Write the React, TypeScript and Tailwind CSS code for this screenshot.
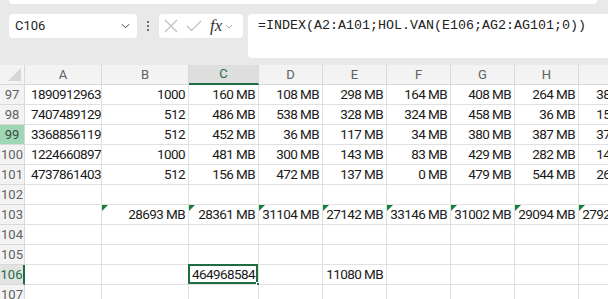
import React from 'react';

const cols = [
  { key: 'A', w: 'w-[77px]', align: 'text-left pl-[6px]' },
  { key: 'B', w: 'w-[87px]', align: 'text-right pr-[3px]' },
  { key: 'C', w: 'w-[70px]', align: 'text-right pr-[3px]' },
  { key: 'D', w: 'w-[64px]', align: 'text-right pr-[3px]' },
  { key: 'E', w: 'w-[64px]', align: 'text-right pr-[3px]' },
  { key: 'F', w: 'w-[64px]', align: 'text-right pr-[3px]' },
  { key: 'G', w: 'w-[64px]', align: 'text-right pr-[3px]' },
  { key: 'H', w: 'w-[64px]', align: 'text-right pr-[3px]' },
  { key: 'I', w: 'w-[64px]', align: 'text-right pr-[3px]' },
];

const rows: { n: number; cells: string[]; flag?: boolean }[] = [
  { n: 97, cells: ['1890912963', '1000', '160 MB', '108 MB', '298 MB', '164 MB', '408 MB', '264 MB', '385 MB'] },
  { n: 98, cells: ['7407489129', '512', '486 MB', '538 MB', '328 MB', '324 MB', '458 MB', '36 MB', '152 MB'] },
  { n: 99, cells: ['3368856119', '512', '452 MB', '36 MB', '117 MB', '34 MB', '380 MB', '387 MB', '376 MB'] },
  { n: 100, cells: ['1224660897', '1000', '481 MB', '300 MB', '143 MB', '83 MB', '429 MB', '282 MB', '142 MB'] },
  { n: 101, cells: ['4737861403', '512', '156 MB', '472 MB', '137 MB', '0 MB', '479 MB', '544 MB', '265 MB'] },
  { n: 102, cells: ['', '', '', '', '', '', '', '', ''] },
  { n: 103, cells: ['', '28693 MB', '28361 MB', '31104 MB', '27142 MB', '33146 MB', '31002 MB', '29094 MB', '27925 MB'], flag: true },
  { n: 104, cells: ['', '', '', '', '', '', '', '', ''] },
  { n: 105, cells: ['', '', '', '', '', '', '', '', ''] },
  { n: 106, cells: ['', '', '464968584', '', '11080 MB', '', '', '', ''] },
  { n: 107, cells: ['', '', '', '', '', '', '', '', ''] },
];

function Chevron({ className }: { className?: string }) {
  return (
    <svg viewBox="0 0 10 6" className={className} fill="none" stroke="currentColor" strokeWidth="1.1">
      <path d="M1 1l4 4 4-4" />
    </svg>
  );
}

export default function App() {
  return (
    <div className="w-[608px] h-[299px] overflow-hidden bg-[#e9e9e9] font-['Roboto',sans-serif]">
      {/* strip of the ribbon above */}
      <div className="ml-[9px] mr-[11px] h-[4px] bg-white rounded-b-[4px]" />

      {/* name box + formula bar */}
      <div className="flex items-start pl-[9px] mt-[10px] h-[44px]">
        <div className="w-[128px] h-[24px] bg-white rounded-[4px] flex items-center pl-[6px] pr-[7px] text-[13px] text-[#1f1f1f]">
          <span className="flex-1">C106</span>
          <Chevron className="w-[9px] h-[6px] text-[#444]" />
        </div>
        <div className="w-[22px] h-[24px] flex flex-col items-center justify-center gap-[2px]">
          <span className="w-[2px] h-[2px] bg-[#444] rounded-full" />
          <span className="w-[2px] h-[2px] bg-[#444] rounded-full" />
          <span className="w-[2px] h-[2px] bg-[#444] rounded-full" />
        </div>
        <div className="w-[84px] h-[24px] bg-white rounded-[4px] flex items-center pl-[5px] text-[#bdbdbd]">
          <svg viewBox="0 0 14 14" className="w-[14px] h-[14px]" fill="none" stroke="currentColor" strokeWidth="1.1">
            <path d="M1 1l12 12M13 1L1 13" />
          </svg>
          <svg viewBox="0 0 16 12" className="w-[16px] h-[12px] ml-[8px]" fill="none" stroke="currentColor" strokeWidth="1.1">
            <path d="M1 6l4.5 4.5L15 1" />
          </svg>
          <span className="ml-[8px] font-['Liberation_Serif',serif] italic text-[17px] leading-none text-[#333] -mt-[2px]">fx</span>
          <Chevron className="w-[8px] h-[5px] ml-[3px] text-[#999]" />
        </div>
        <div className="ml-[5px] flex-1 h-[44px] bg-white rounded-l-[4px] pl-[10px] pt-[4px] font-['Liberation_Mono',monospace] text-[13.33px] leading-[16px] text-[#222] whitespace-nowrap">
          =INDEX(A2:A101;HOL.VAN(E106;AG2:AG101;0))
        </div>
      </div>

      {/* sheet */}
      <div className="mt-[7px] w-[643px]">
        <div className="flex h-[20px] bg-[#f3f3f3] text-[13px] text-[#616161]">
          <div className="w-[25px] h-[20px] border-r border-b border-[#d9d9d9] flex items-end justify-end pr-[3px] pb-[3px]">
            <svg viewBox="0 0 14 14" className="w-[13px] h-[13px]">
              <path d="M14 0V14H0Z" fill="#d6d6d6" />
            </svg>
          </div>
          {cols.map((c) =>
            c.key === 'C' ? (
              <div key={c.key} className={`${c.w} h-[20px] bg-[#dedede] border-r border-[#d9d9d9] border-b-2 border-b-[#1e6c41] text-[#1e6c41] flex items-center justify-center`}>
                {c.key}
              </div>
            ) : (
              <div key={c.key} className={`${c.w} h-[20px] border-r border-b border-[#d9d9d9] flex items-center justify-center`}>
                {c.key}
              </div>
            )
          )}
        </div>

        {rows.map((r) => (
          <div key={r.n} className="flex h-[20px]">
            <div
              className={
                r.n === 99
                  ? 'w-[25px] h-[20px] bg-[#9fd6b6] border-r border-b border-[#d9d9d9] text-[13px] text-[#3c4a41] flex items-center justify-center'
                  : r.n === 106
                  ? 'w-[25px] h-[20px] bg-[#e3e3e3] border-r-2 border-r-[#1e6c41] border-b border-[#d9d9d9] text-[13px] text-[#1e6c41] flex items-center justify-center'
                  : 'w-[25px] h-[20px] bg-[#f3f3f3] border-r border-b border-[#d9d9d9] text-[13px] text-[#616161] flex items-center justify-center'
              }
            >
              {r.n}
            </div>
            {cols.map((c, i) => {
              const v = r.cells[i];
              const selected = r.n === 106 && c.key === 'C';
              return (
                <div
                  key={c.key}
                  className={`${c.w} h-[20px] relative bg-white border-r border-b border-[#e1e1e1] ${c.align} text-[13.5px] tracking-[-0.6px] leading-[19px] text-[#1a1a1a] whitespace-nowrap`}
                >
                  {r.flag && v && (
                    <span className="absolute left-0 top-0 w-0 h-0 border-t-[6px] border-t-[#1b7a3e] border-r-[6px] border-r-transparent" />
                  )}
                  {v}
                  {selected && (
                    <>
                      <span className="absolute -left-[1px] -top-[1px] right-0 bottom-0 border-2 border-[#1e6c41] pointer-events-none" />
                      <span className="absolute -right-[3px] -bottom-[3px] w-[5px] h-[5px] bg-[#1e6c41] border border-white" />
                    </>
                  )}
                </div>
              );
            })}
          </div>
        ))}
      </div>
    </div>
  );
}
